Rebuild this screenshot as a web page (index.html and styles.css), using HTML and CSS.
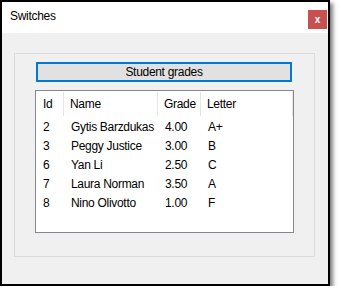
FILE: index.html
```html
<!DOCTYPE html>
<html lang="en">
<head>
    <meta charset="UTF-8">
    <title>Switches</title>
    <link rel="stylesheet" href="styles.css">
</head>
<body>
    <div class="window">
        <div class="titlebar">
            <span class="title">Switches</span>
            <span class="close">x</span>
        </div>
        <div class="client">
            <div class="groupbox">
                <div class="button">Student grades</div>
                <div class="listbox">
                    <div class="row header">
                        <div class="cell">Id</div>
                        <div class="cell">Name</div>
                        <div class="cell">Grade</div>
                        <div class="cell">Letter</div>
                    </div>
                    <div class="row">
                        <div class="cell">2</div>
                        <div class="cell">Gytis Barzdukas</div>
                        <div class="cell">4.00</div>
                        <div class="cell">A+</div>
                    </div>
                    <div class="row">
                        <div class="cell">3</div>
                        <div class="cell">Peggy Justice</div>
                        <div class="cell">3.00</div>
                        <div class="cell">B</div>
                    </div>
                    <div class="row">
                        <div class="cell">6</div>
                        <div class="cell">Yan Li</div>
                        <div class="cell">2.50</div>
                        <div class="cell">C</div>
                    </div>
                    <div class="row">
                        <div class="cell">7</div>
                        <div class="cell">Laura Norman</div>
                        <div class="cell">3.50</div>
                        <div class="cell">A</div>
                    </div>
                    <div class="row">
                        <div class="cell">8</div>
                        <div class="cell">Nino Olivotto</div>
                        <div class="cell">1.00</div>
                        <div class="cell">F</div>
                    </div>
                </div>
            </div>
        </div>
    </div>
</body>
</html>
```

FILE: styles.css
```css
body {
    margin: 0;
    padding: 0;
    background: #fff;
    font-family: 'Liberation Sans', Arial, sans-serif;
    font-size: 12px;
    letter-spacing: -0.3px;
    color: #000;
}
.window {
    width: 326px;
    height: 282px;
    border: 2px solid #000;
    background: #f0f0f0;
    box-shadow: 3px 3px 4px rgba(0, 0, 0, 0.5);
    display: flex;
    flex-direction: column;
}
.titlebar {
    height: 31px;
    background: #fff;
    display: flex;
    align-items: center;
    justify-content: space-between;
    padding-left: 8px;
}
.title {
    font-size: 12px;
    margin-top: -4px;
}
.close {
    width: 19px;
    height: 19px;
    margin-top: 4px;
    margin-right: 1px;
    background: #c75050;
    color: #fff;
    font-weight: bold;
    font-size: 10px;
    display: flex;
    align-items: center;
    justify-content: center;
}
.client {
    flex: 1;
    padding: 20px 0 0 12px;
}
.groupbox {
    width: 279px;
    height: 194px;
    border: 1px solid #dcdcdc;
    padding: 8px 0 0 20px;
}
.button {
    width: 252px;
    height: 16px;
    margin-left: 1px;
    border: 2px solid #0078d7;
    background: #e1e1e1;
    display: flex;
    align-items: center;
    justify-content: center;
}
.listbox {
    width: 257px;
    height: 141px;
    margin-top: 8px;
    border: 1px solid #828790;
    background: #fff;
}
.row {
    display: grid;
    grid-template-columns: 28px 94px 43px 92px;
    height: 19px;
    align-items: center;
}
.row.header {
    height: 25px;
    margin-bottom: 1px;
}
.cell {
    padding-left: 7px;
    white-space: nowrap;
}
.header .cell {
    height: 24px;
    margin-top: 1px;
    line-height: 24px;
    border-right: 1px solid #e5e5e5;
    padding-left: 6px;
}
.header .cell:first-child {
    padding-left: 7px;
}
```
